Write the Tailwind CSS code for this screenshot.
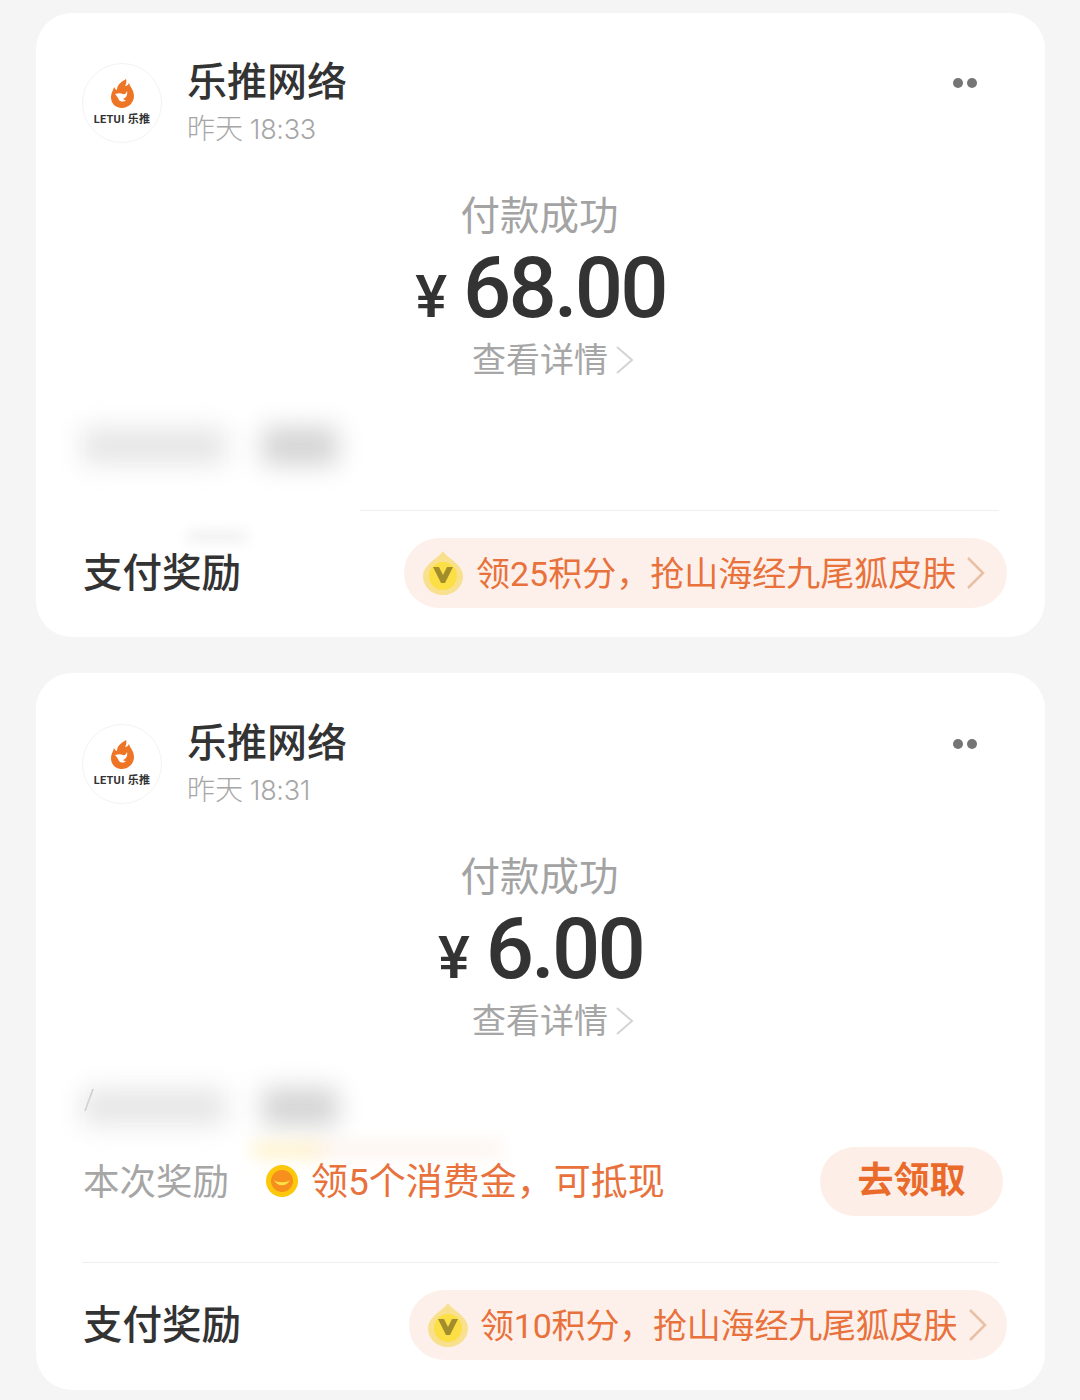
<!DOCTYPE html>
<html lang="zh-CN">
  <head>
    <meta charset="UTF-8" />
    <meta name="viewport" content="width=device-width, initial-scale=1.0" />
    <title>付款记录</title>
    <script src="https://cdn.jsdelivr.net/npm/@tailwindcss/browser@4"></script>
  </head>
  <body class="bg-[#f5f5f5] font-['Roboto','Noto_Sans_CJK_SC',sans-serif] overflow-hidden">
    <main class="h-[1400px] w-[1080px] flex flex-col gap-[36px] pt-[13px] pl-[36px]">

      <!-- card 1 -->
      <section class="w-[1009px] h-[624px] bg-white rounded-[36px] pt-[50px] px-[46px] flex flex-col">
        <div class="flex h-[80px] items-start">
          <div class="w-[80px] h-[80px] shrink-0 rounded-full border border-[#f3f3f3] flex flex-col items-center pt-[15px]">
            <svg class="w-[26px] h-[30px]" viewBox="0 0 26 30"><path fill="#ee7426" d="M17 0c1 3 0 5-1 7 2 0 3-1 4-3 1 4 5 7 5 13 0 7-6 12-12 12S2 25 2 18c0-4 2-6 3-10 1 2 2 3 3 3 0-5 4-8 9-11z"/><path fill="#fff" d="M6 15c3-1 6-1 8 0 2 1 3-1 4-3 1 4-1 7-4 8 1 1 2 1 3 1-2 2-5 2-7 0-1-2-2-4-4-6z"/></svg>
            <div class="mt-[5px] text-[11px] leading-[12px] font-bold tracking-[0.3px] text-[#333] whitespace-nowrap">LETUI 乐推</div>
          </div>
          <div class="ml-[25px] flex-1">
            <div class="text-[40px] leading-[40px] font-medium text-[#333]">乐推网络</div>
            <div class="text-[28px] leading-[32px] mt-[11px] text-[#a6a6a6] font-light">昨天 <span class="font-['Inter'] text-[27px] tracking-[-0.3px]">18:33</span></div>
          </div>
          <div class="flex gap-[4px] mt-[15px] mr-[22px]">
            <span class="w-[10px] h-[10px] rounded-full bg-[#757575]"></span>
            <span class="w-[10px] h-[10px] rounded-full bg-[#757575]"></span>
          </div>
        </div>

        <div class="flex flex-col items-center mt-[51px]">
          <div class="mr-[2px] text-[39.5px] leading-[46px] text-[#a3a3a3]">付款成功</div>
          <div class="flex items-baseline h-[96px] text-[#333]">
            <span class="text-[60px] leading-[96px] font-medium mr-[16px]">¥</span>
            <span class="text-[85px] leading-[96px] font-medium tracking-[-2.8px]">68.00</span>
          </div>
          <div class="flex items-center h-[40px] mt-[4px] ml-[26px] text-[34px] leading-[40px] text-[#a6a6a6]">
            查看详情
            <svg class="w-[20px] h-[30px] ml-[7px]" viewBox="0 0 20 30" fill="none" stroke="#d4d4d4" stroke-width="2"><path d="M2 2l15 13L2 28"/></svg>
          </div>
        </div>

        <div class="relative flex gap-[36px] mt-[44px] h-[36px]">
          <div class="w-[144px] h-[36px] mt-[4px] bg-[#e6e6e6] blur-[13px]"></div>
          <div class="w-[76px] h-[38px] mt-[3px] bg-[#d4d4d4] blur-[13px]"></div>
          <div class="absolute left-[105px] top-[108px] w-[60px] h-[9px] bg-[#ececec] blur-[7px]"></div>
        </div>

        <div class="h-px ml-[278px] mt-[50px] bg-[#efefef]"></div>

        <div class="flex items-center justify-between mt-[26px] mr-[-8px]">
          <div class="mt-[2px] ml-[1px] text-[39.5px] leading-[70px] font-medium text-[#333]">支付奖励</div>
          <div class="w-[603px] h-[70px] rounded-full bg-[#fdf0ea] flex items-center pl-[18px]">
            <svg class="w-[42px] h-[46px] shrink-0" viewBox="0 0 42 46"><path fill="#f8e08e" d="M21 1c3 5 9 8 14 13 4 4 6 8 6 12 0 11-9 19-20 19S1 37 1 26c0-4 2-8 6-12C12 9 18 6 21 1z"/><circle cx="21" cy="26" r="14" fill="#fbdf45"/><path fill="#a18d2c" d="M11 17h6l4 8 4-8h6l-8 16h-4z"/></svg>
            <span class="ml-[12px] mt-[2px] text-[34px] leading-[70px] text-[#e8713c] whitespace-nowrap">领25积分，抢山海经九尾狐皮肤</span>
            <svg class="w-[20px] h-[34px] ml-[10px] shrink-0" viewBox="0 0 20 34" fill="none" stroke="#e8c0a4" stroke-width="2.5"><path d="M2 2l15 15L2 32"/></svg>
          </div>
        </div>
      </section>

      <!-- card 2 -->
      <section class="w-[1009px] h-[717px] bg-white rounded-[36px] pt-[51px] px-[46px] flex flex-col">
        <div class="flex h-[80px] items-start">
          <div class="w-[80px] h-[80px] shrink-0 rounded-full border border-[#f3f3f3] flex flex-col items-center pt-[15px]">
            <svg class="w-[26px] h-[30px]" viewBox="0 0 26 30"><path fill="#ee7426" d="M17 0c1 3 0 5-1 7 2 0 3-1 4-3 1 4 5 7 5 13 0 7-6 12-12 12S2 25 2 18c0-4 2-6 3-10 1 2 2 3 3 3 0-5 4-8 9-11z"/><path fill="#fff" d="M6 15c3-1 6-1 8 0 2 1 3-1 4-3 1 4-1 7-4 8 1 1 2 1 3 1-2 2-5 2-7 0-1-2-2-4-4-6z"/></svg>
            <div class="mt-[5px] text-[11px] leading-[12px] font-bold tracking-[0.3px] text-[#333] whitespace-nowrap">LETUI 乐推</div>
          </div>
          <div class="ml-[25px] flex-1">
            <div class="text-[40px] leading-[40px] font-medium text-[#333]">乐推网络</div>
            <div class="text-[28px] leading-[32px] mt-[11px] text-[#a6a6a6] font-light">昨天 <span class="font-['Inter'] text-[27px] tracking-[-0.3px]">18:31</span></div>
          </div>
          <div class="flex gap-[4px] mt-[15px] mr-[22px]">
            <span class="w-[10px] h-[10px] rounded-full bg-[#757575]"></span>
            <span class="w-[10px] h-[10px] rounded-full bg-[#757575]"></span>
          </div>
        </div>

        <div class="flex flex-col items-center mt-[51px]">
          <div class="mr-[2px] text-[39.5px] leading-[46px] text-[#a3a3a3]">付款成功</div>
          <div class="flex items-baseline h-[96px] text-[#333]">
            <span class="text-[60px] leading-[96px] font-medium mr-[16px]">¥</span>
            <span class="text-[85px] leading-[96px] font-medium tracking-[-2.8px]">6.00</span>
          </div>
          <div class="flex items-center h-[40px] mt-[4px] ml-[26px] text-[34px] leading-[40px] text-[#a6a6a6]">
            查看详情
            <svg class="w-[20px] h-[30px] ml-[7px]" viewBox="0 0 20 30" fill="none" stroke="#d4d4d4" stroke-width="2"><path d="M2 2l15 13L2 28"/></svg>
          </div>
        </div>

        <div class="relative flex gap-[36px] mt-[44px] h-[36px]">
          <svg class="absolute left-[2px] top-[3px] w-[10px] h-[24px]" viewBox="0 0 10 24" fill="none" stroke="#b5b5b5" stroke-width="1.5"><path d="M9 1L1 23"/></svg>
          <div class="w-[144px] h-[36px] mt-[4px] bg-[#e6e6e6] blur-[13px]"></div>
          <div class="w-[76px] h-[38px] mt-[3px] bg-[#d4d4d4] blur-[13px]"></div>
        </div>

        <div class="relative flex items-center mt-[25px] h-[70px] ml-[1px]">
          <div class="absolute left-[170px] top-[-2px] w-[70px] h-[12px] bg-[#ffeebb] blur-[9px]"></div>
          <div class="absolute left-[230px] top-[-2px] w-[190px] h-[10px] bg-[#fdeee4] blur-[9px]"></div>
          <span class="relative mt-[4px] w-[183px] text-[36.5px] leading-[70px] text-[#a6a6a6]">本次奖励</span>
          <span class="relative w-[32px] h-[32px] shrink-0 rounded-full bg-[#fdc70c] flex items-center justify-center">
            <svg class="w-[24px] h-[24px]" viewBox="0 0 24 24"><circle cx="12" cy="12" r="11" fill="#f78f1e"/><path d="M4 11c3 7 13 7 16 0-3 3-13 3-16 0z" fill="#fde047"/></svg>
          </span>
          <span class="relative mt-[4px] ml-[13px] text-[37px] leading-[70px] text-[#e8713c] whitespace-nowrap">领5个消费金，可抵现</span>
          <button class="ml-auto mr-[-4px] w-[183px] h-[69px] rounded-full bg-[#fdeee8] text-[36px] font-bold text-[#ea6a2a]">去领取</button>
        </div>

        <div class="h-px mt-[46px] bg-[#efefef]"></div>

        <div class="flex items-center justify-between mt-[26px] mr-[-8px]">
          <div class="mt-[2px] ml-[1px] text-[39.5px] leading-[70px] font-medium text-[#333]">支付奖励</div>
          <div class="w-[598px] h-[70px] rounded-full bg-[#fdf0ea] flex items-center pl-[18px]">
            <svg class="w-[42px] h-[46px] shrink-0" viewBox="0 0 42 46"><path fill="#f8e08e" d="M21 1c3 5 9 8 14 13 4 4 6 8 6 12 0 11-9 19-20 19S1 37 1 26c0-4 2-8 6-12C12 9 18 6 21 1z"/><circle cx="21" cy="26" r="14" fill="#fbdf45"/><path fill="#a18d2c" d="M11 17h6l4 8 4-8h6l-8 16h-4z"/></svg>
            <span class="ml-[11px] mt-[2px] text-[34px] leading-[70px] tracking-[-0.2px] text-[#e8713c] whitespace-nowrap">领10积分，抢山海经九尾狐皮肤</span>
            <svg class="w-[20px] h-[34px] ml-[11px] shrink-0" viewBox="0 0 20 34" fill="none" stroke="#e8c0a4" stroke-width="2.5"><path d="M2 2l15 15L2 32"/></svg>
          </div>
        </div>
      </section>
    </main>
  </body>
</html>
